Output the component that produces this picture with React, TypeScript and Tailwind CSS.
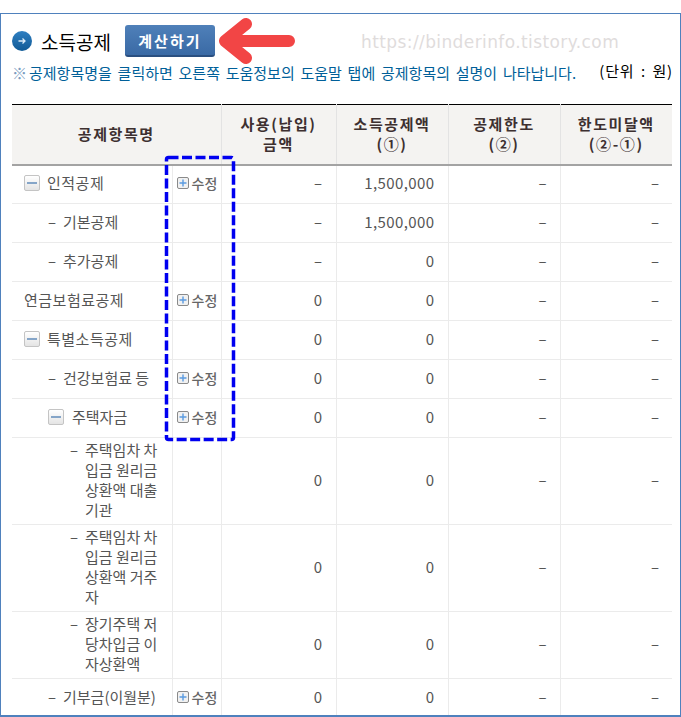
import React from 'react';

const FONT = "font-['Noto_Sans_CJK_KR','Noto_Sans',sans-serif]";

type Row = {
  name: React.ReactNode;
  level: 0 | 1 | 2 | 3;
  tree?: boolean;
  edit?: boolean;
  used: string;
  amount: string;
  h: string;
};

const rows: Row[] = [
  { name: '인적공제', level: 0, tree: true, edit: true, used: '–', amount: '1,500,000', h: 'h-[39px]' },
  { name: '기본공제', level: 1, used: '–', amount: '1,500,000', h: 'h-[39px]' },
  { name: '추가공제', level: 1, used: '–', amount: '0', h: 'h-[39px]' },
  { name: '연금보험료공제', level: 0, edit: true, used: '0', amount: '0', h: 'h-[39px]' },
  { name: '특별소득공제', level: 0, tree: true, used: '0', amount: '0', h: 'h-[39px]' },
  { name: '건강보험료 등', level: 1, edit: true, used: '0', amount: '0', h: 'h-[39px]' },
  { name: '주택자금', level: 1, tree: true, edit: true, used: '0', amount: '0', h: 'h-[39px]' },
  { name: <>주택임차 차<br />입금 원리금<br />상환액 대출<br />기관</>, level: 2, used: '0', amount: '0', h: 'h-[87px]' },
  { name: <>주택임차 차<br />입금 원리금<br />상환액 거주<br />자</>, level: 2, used: '0', amount: '0', h: 'h-[87px]' },
  { name: <>장기주택 저<br />당차입금 이<br />자상환액</>, level: 2, used: '0', amount: '0', h: 'h-[67px]' },
  { name: '기부금(이월분)', level: 1, edit: true, used: '0', amount: '0', h: 'h-[39px]' },
];

const TreeIcon = () => (
  <span className="w-[16px] h-[16px] shrink-0 rounded-[2px] border border-[#c4c4c4] bg-gradient-to-b from-white to-[#e4e4e4] flex items-center justify-center">
    <span className="w-[10px] h-[2px] bg-[#85a5c8]" />
  </span>
);

const PlusIcon = () => (
  <svg width="12" height="12" viewBox="0 0 12 12" className="shrink-0 mt-[1px]">
    <rect x="0.5" y="0.5" width="11" height="11" rx="1.5" fill="#f1f1f1" stroke="#8a8a8a" />
    <path d="M6 2.5v7M2.5 6h7" stroke="#5b9be0" strokeWidth="1.4" />
  </svg>
);

const RowName = ({ row }: { row: Row }) => {
  if (row.level === 2) {
    return (
      <div className="flex pl-[58px] justify-start">
        <span className="w-[15px] shrink-0">–</span>
        <span>{row.name}</span>
      </div>
    );
  }
  if (row.level === 1) {
    return (
      <div className="flex items-center pl-[36px]">
        {row.tree ? (
          <>
            <TreeIcon />
            <span className="ml-[8px]">{row.name}</span>
          </>
        ) : (
          <>
            <span className="w-[15px] shrink-0">–</span>
            <span className="whitespace-nowrap">{row.name}</span>
          </>
        )}
      </div>
    );
  }
  return (
    <div className="flex items-center pl-[12px]">
      {row.tree && <TreeIcon />}
      <span className={row.tree ? 'ml-[7px] tracking-[0.5px]' : 'tracking-[0.5px]'}>{row.name}</span>
    </div>
  );
};

export default function App() {
  return (
    <div className={`${FONT} relative w-[681px] h-[717px] overflow-hidden bg-white`}>
      <div className="mt-[13px] h-[704px] border border-[#4f81bd] border-b-2 px-[11px] overflow-hidden relative">
        {/* Title */}
        <div className="flex items-center h-[54px]">
          <span className="w-[20px] h-[20px] rounded-full bg-gradient-to-b from-[#2f7fc1] to-[#0f5a96] flex items-center justify-center">
            <svg width="10" height="10" viewBox="0 0 10 10">
              <path d="M1.5 5h6.5M5.5 2.5 8 5 5.5 7.5" fill="none" stroke="#dcecf8" strokeWidth="1.3" />
            </svg>
          </span>
          <h1 className="ml-[9px] text-[19px] leading-none text-black">소득공제</h1>
          <button className="ml-[14px] w-[90px] h-[32px] rounded-[3px] bg-gradient-to-b from-[#4f80b9] to-[#3a6aa5] border-b-2 border-[#2a4f80] text-white text-[15px] font-bold tracking-[2px] leading-none">
            계산하기
          </button>
          <svg width="76" height="52" viewBox="0 0 76 52" className="ml-[4px]">
            <path d="M27 9 6 26l21 17M6 26h64" fill="none" stroke="#f24545" strokeWidth="12" strokeLinecap="round" strokeLinejoin="round" />
          </svg>
          <span className="absolute left-[360px] top-[16px] font-['DejaVu_Sans',sans-serif] text-[17px] text-[#dfdcdc] tracking-[0.4px]">
            https://binderinfo.tistory.com
          </span>
        </div>

        {/* Note */}
        <div className="flex justify-between h-[42px] -mt-[6px] text-[15px] leading-[20px] [word-spacing:2.4px]">
          <p className="flex text-[#005f99] whitespace-nowrap pt-[1px]">
            <span className="text-[#7b9cc0]">※</span>
            <span className="ml-[2px]">공제항목명을 클릭하면 오른쪽 도움정보의 도움말 탭에 공제항목의 설명이 나타납니다.</span>
          </p>
          <span className="text-black whitespace-nowrap -mt-[1px] -mr-[4px] tracking-[0.8px]">(단위 : 원)</span>
        </div>

        {/* Table */}
        <table className="w-[660px] table-fixed border-collapse text-[15px] leading-[20px] text-[#555]">
          <colgroup>
            <col className="w-[160px]" />
            <col className="w-[49px]" />
            <col className="w-[115px]" />
            <col className="w-[112px]" />
            <col className="w-[112px]" />
            <col className="w-[112px]" />
          </colgroup>
          <thead>
            <tr className="h-[60px] bg-[#f4f3f1] border-t border-t-black border-b-2 border-b-[#a3a3a3] text-[#3d3030] text-[15px] tracking-[1.6px]">
              <th colSpan={2} className="font-semibold">공제항목명</th>
              <th className="font-semibold border-l border-[#e3e3e3]">사용(납입)<br />금액</th>
              <th className="font-semibold border-l border-[#e3e3e3]">소득공제액<br />(①)</th>
              <th className="font-semibold border-l border-[#e3e3e3]">공제한도<br />(②)</th>
              <th className="font-semibold border-l border-[#e3e3e3]">한도미달액<br />(②-①)</th>
            </tr>
          </thead>
          <tbody>
            {rows.map((row, i) => (
              <tr key={i} className={`${row.h} border-b border-[#ebebeb]`}>
                <td className="p-0 pb-[3px] align-middle"><RowName row={row} /></td>
                <td className="p-0 pb-[3px] border-l border-[#ebebeb] align-middle">
                  {row.edit && (
                    <div className="flex items-center pl-[4px] gap-[3px] text-[14px] font-medium text-[#666] whitespace-nowrap">
                      <PlusIcon />수정
                    </div>
                  )}
                </td>
                <td className="p-0 pb-[3px] pr-[13px] border-l border-[#ebebeb] text-right align-middle tracking-[0.4px]">{row.used}</td>
                <td className="p-0 pb-[3px] pr-[13px] border-l border-[#ebebeb] text-right align-middle tracking-[0.4px]">{row.amount}</td>
                <td className="p-0 pb-[3px] pr-[13px] border-l border-[#ebebeb] text-right align-middle">–</td>
                <td className="p-0 pb-[3px] pr-[13px] border-l border-[#ebebeb] text-right align-middle">–</td>
              </tr>
            ))}
          </tbody>
        </table>
      </div>

      {/* Dashed annotation over the edit column */}
      <svg width="72" height="287" viewBox="0 0 72 287" className="absolute left-[164px] top-[155px]">
        <rect x="2.5" y="2.5" width="67" height="282" rx="2" fill="none" stroke="#0000f0" strokeWidth="3.5" strokeDasharray="10 3.5" />
      </svg>
    </div>
  );
}
